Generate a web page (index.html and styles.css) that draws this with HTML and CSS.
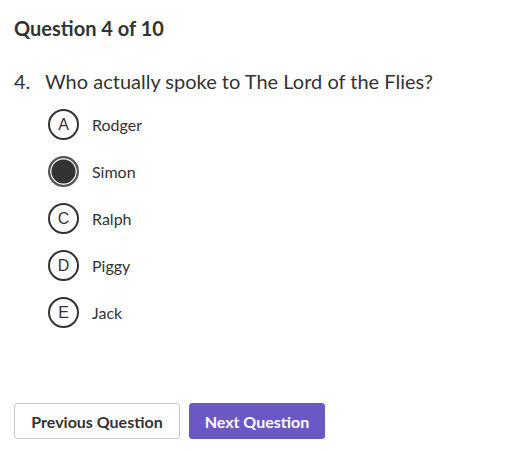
FILE: index.html
```html
<!DOCTYPE html>
<html>
<head>
<meta charset="utf-8">
<link rel="stylesheet" href="styles.css">
</head>
<body>
<div class="quiz">
  <h2 class="title">Question 4 of 10</h2>
  <div class="question"><span class="num">4.</span><span>Who actually spoke to The Lord of the Flies?</span></div>
  <ul class="options">
    <li class="option"><span class="badge">A</span><span class="label">Rodger</span></li>
    <li class="option"><span class="badge selected"></span><span class="label">Simon</span></li>
    <li class="option"><span class="badge">C</span><span class="label">Ralph</span></li>
    <li class="option"><span class="badge">D</span><span class="label">Piggy</span></li>
    <li class="option"><span class="badge">E</span><span class="label">Jack</span></li>
  </ul>
  <div class="actions">
    <button class="btn btn-secondary">Previous Question</button>
    <button class="btn btn-primary">Next Question</button>
  </div>
</div>
</body>
</html>
```

FILE: styles.css
```css
html, body {
  margin: 0;
  padding: 0;
  background: #fff;
}
body {
  font-family: "Lato", "Noto Sans", sans-serif;
  color: #333;
}
.quiz {
  padding: 14px 14px 0 14px;
  display: flex;
  flex-direction: column;
}
.title {
  margin: 0;
  font-size: 20px;
  line-height: 28px;
  font-weight: 700;
  color: #333;
}
.question {
  margin-top: 25px;
  display: flex;
  font-size: 20px;
  line-height: 28px;
}
.question .num {
  width: 31px;
}
.options {
  list-style: none;
  margin: 14px 0 0 34px;
  padding: 0;
  display: flex;
  flex-direction: column;
  gap: 16px;
}
.option {
  display: flex;
  align-items: center;
  gap: 13px;
  height: 31px;
}
.badge {
  box-sizing: border-box;
  width: 31px;
  height: 31px;
  border-radius: 50%;
  border: 2px solid #333;
  display: flex;
  align-items: center;
  justify-content: center;
  font-family: "Liberation Sans", Arial, sans-serif;
  font-size: 16px;
  color: #333;
}
.badge.selected {
  background: #333;
  border-color: #555;
  box-shadow: inset 0 0 0 1.5px #e8e8e8;
}
.label {
  font-size: 16px;
}
.actions {
  margin-top: 75px;
  display: flex;
  gap: 9px;
}
.btn {
  font-family: inherit;
  font-size: 16px;
  font-weight: 700;
  height: 36px;
  padding: 0;
  border-radius: 3px;
  white-space: nowrap;
  cursor: pointer;
}
.btn-secondary {
  background: #fff;
  color: #333;
  border: 1px solid #c8c8c8;
  width: 166px;
}
.btn-primary {
  background: #6b58c4;
  color: #fff;
  border: 1px solid #6b58c4;
  width: 136px;
}
```
